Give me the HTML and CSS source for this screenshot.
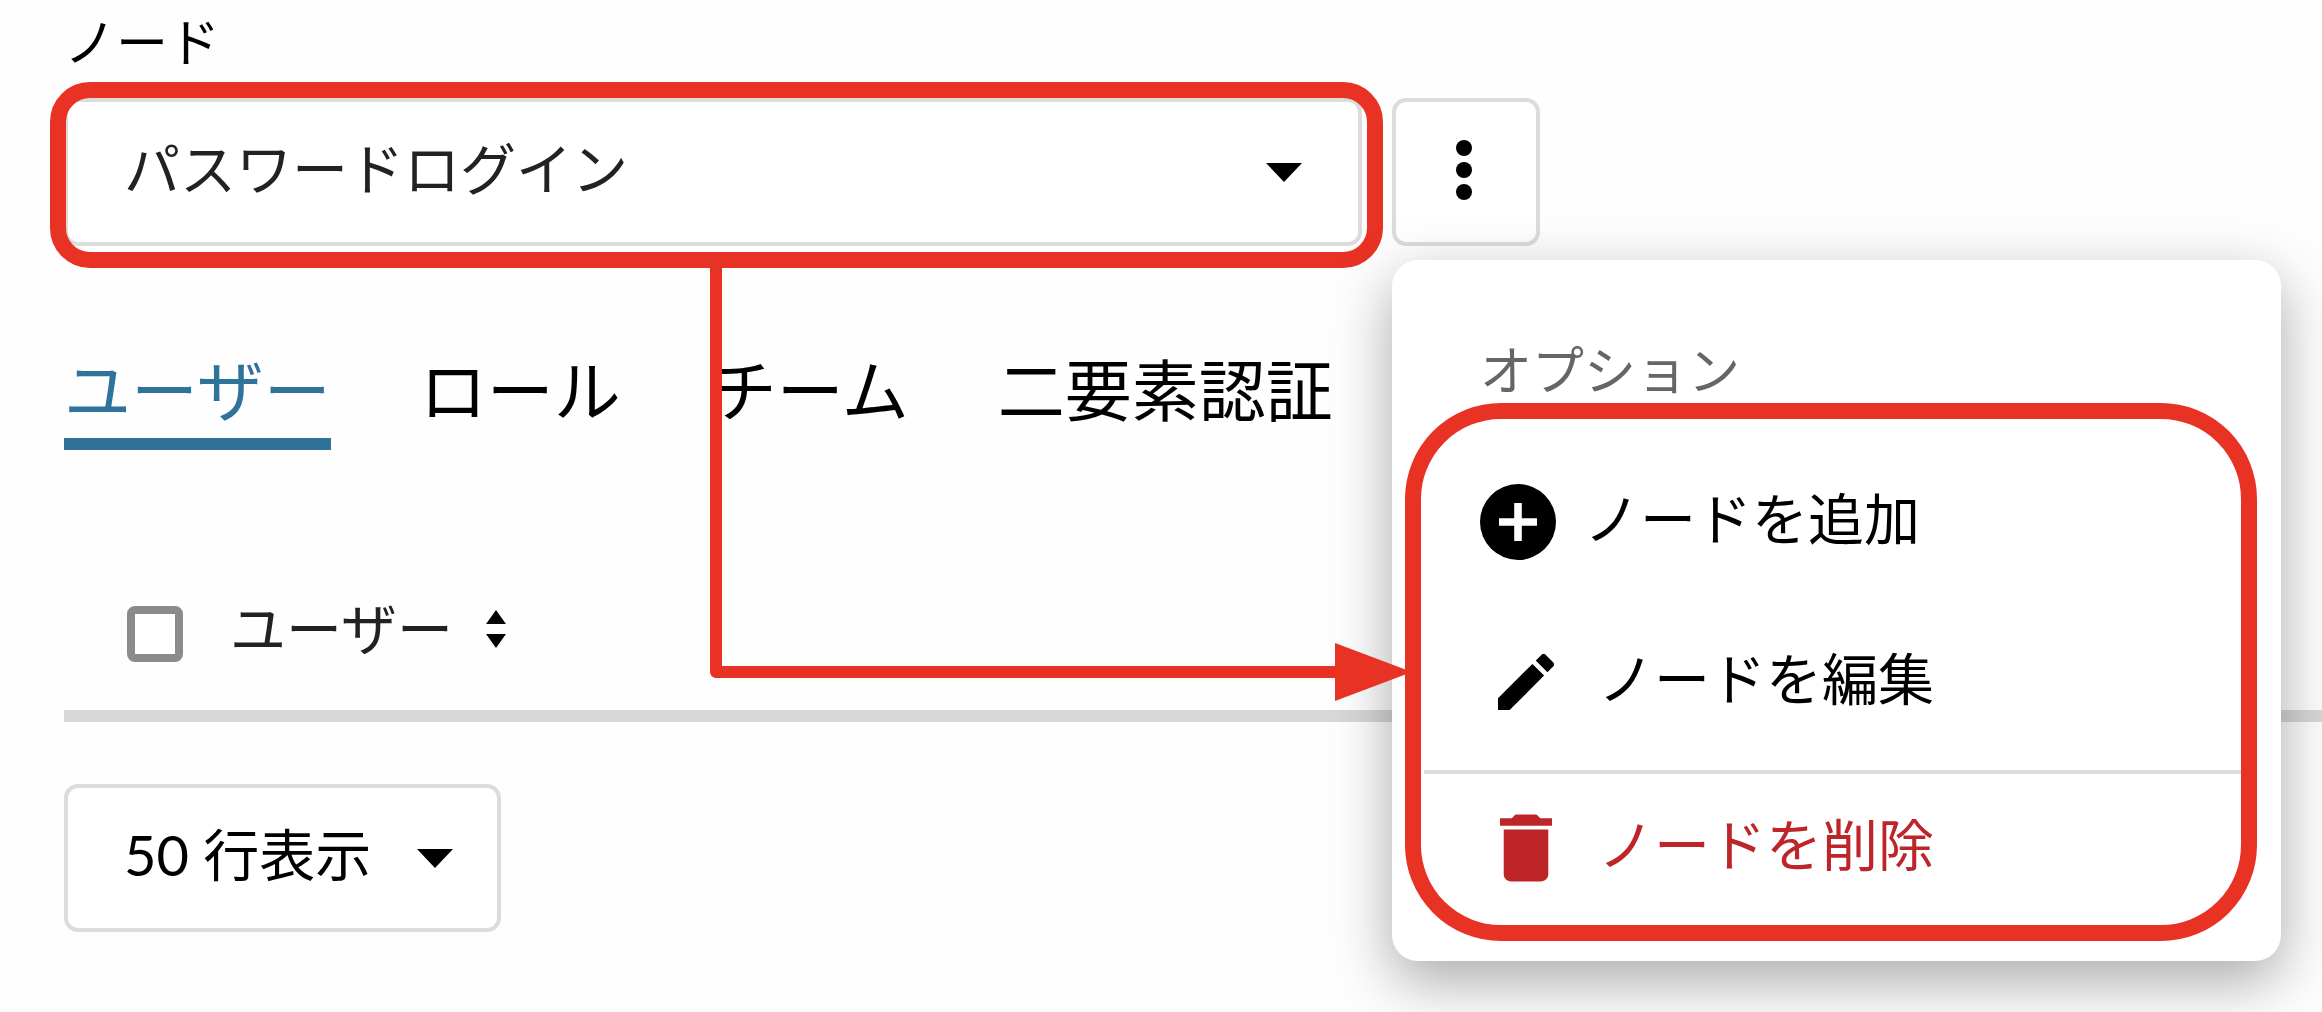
FILE: index.html
```html
<!DOCTYPE html>
<html lang="ja">
<head>
<meta charset="utf-8">
<meta name="viewport" content="width=device-width, initial-scale=1">
<title>ノード</title>
<link rel="stylesheet" href="styles.css">
</head>
<body>
<main class="page">
  <label class="node-label" for="node">ノード</label>
  <div class="node-row">
    <div class="select node-select">
      <select id="node" class="select-field">
        <option>パスワードログイン</option>
      </select>
      <svg class="caret" viewBox="0 0 36 19" aria-hidden="true"><path d="M0 0h36L18 19z"/></svg>
      <div class="highlight highlight-select"></div>
    </div>
    <div class="options">
      <button class="kebab" type="button" aria-label="オプション" aria-expanded="true">
        <svg class="kebab-icon" viewBox="0 0 16 60" aria-hidden="true"><circle cx="8" cy="8" r="8"/><circle cx="8" cy="30" r="8"/><circle cx="8" cy="52" r="8"/></svg>
      </button>
      <div class="menu">
        <h2 class="menu-title">オプション</h2>
        <div class="menu-list">
          <button class="menu-item" type="button">
            <svg class="icon-add" viewBox="2 2 20 20" aria-hidden="true"><path d="M12 2a10 10 0 1 0 0 20 10 10 0 0 0 0-20zm5 11h-4v4h-2v-4H7v-2h4V7h2v4h4v2z"/></svg>
            <span>ノードを追加</span>
          </button>
          <button class="menu-item menu-item-wide" type="button">
            <svg class="icon-edit" viewBox="3 3 18 18" aria-hidden="true"><path d="M3 17.25V21h3.75L17.81 9.94l-3.75-3.75L3 17.25zM20.71 7.04a1 1 0 0 0 0-1.41l-2.34-2.34a1 1 0 0 0-1.41 0l-1.83 1.83 3.75 3.75 1.83-1.83z"/></svg>
            <span>ノードを編集</span>
          </button>
          <button class="menu-item menu-item-wide menu-item-danger" type="button">
            <svg class="icon-delete" viewBox="5 3 14 18" aria-hidden="true"><path d="M6 19c0 1.100.9 2 2 2h8c1.100 0 2-.9 2-2V7H6v12zM19 4h-3.200l-.6-.7a1 1 0 0 0-.7-.3H9.500a1 1 0 0 0-.7.300l-.6.700H5v2h14V4z"/></svg>
            <span>ノードを削除</span>
          </button>
          <div class="highlight highlight-menu"></div>
        </div>
      </div>
    </div>
  </div>

  <nav class="tabs">
    <a class="tab tab-active" href="#users" aria-current="page">ユーザー</a>
    <a class="tab" href="#roles">ロール</a>
    <a class="tab" href="#teams">チーム</a>
    <a class="tab" href="#two-factor">二要素認証</a>
  </nav>

  <table class="users">
    <thead>
      <tr>
        <th class="cell-check"><input class="check" type="checkbox" aria-label="すべて選択"></th>
        <th class="cell-user">
          <button class="sort" type="button">ユーザー
            <svg class="sort-icon" viewBox="0 0 20 38" aria-hidden="true"><path d="M10 0l10 14H0zM0 24h20L10 38z"/></svg>
          </button>
        </th>
      </tr>
    </thead>
  </table>

  <div class="select rows-select">
    <select class="select-field" aria-label="表示行数">
      <option>50 行表示</option>
    </select>
    <svg class="caret" viewBox="0 0 36 19" aria-hidden="true"><path d="M0 0h36L18 19z"/></svg>
  </div>

  <svg class="connector" viewBox="0 0 702 436" aria-hidden="true"><path class="connector-line" d="M6 0v404h630"/><path class="connector-head" d="M625 375l77 29-77 29z"/></svg>
</main>
</body>
</html>
```
FILE: styles.css
```css
:root {
  --red: #e83224;
  --blue: #2f739b;
  --danger: #bd2529;
  --line: #dcdcdc;
}

* {
  box-sizing: border-box;
}

body {
  margin: 0;
  background: #fefefe;
  color: #000;
  font-family: Lato, "Noto Sans CJK JP", sans-serif;
  font-size: 56px;
}

button,
select {
  margin: 0;
  color: inherit;
  font: inherit;
}

.page {
  position: relative;
  padding: 14px 0 80px 64px;
}

.node-label {
  display: block;
  font-size: 52px;
  line-height: 56px;
}

.node-row {
  display: flex;
  gap: 30px;
  margin-top: 28px;
}

.select {
  display: grid;
  align-items: center;
  max-width: 100%;
}

.select-field {
  grid-area: 1 / 1;
  width: 100%;
  height: 148px;
  padding: 0 56px 8px;
  border: 4px solid var(--line);
  border-radius: 14px;
  background: #fff;
  appearance: none;
}

.caret {
  grid-area: 1 / 1;
  justify-self: end;
  width: 36px;
  height: 19px;
  pointer-events: none;
}

.node-select {
  position: relative;
  width: 1298px;
}

.node-select .select-field {
  color: #222;
}

.node-select .caret {
  margin-right: 60px;
}

.highlight {
  position: absolute;
  border: 16px solid var(--red);
  pointer-events: none;
}

.highlight-select {
  inset: -16px -21px -22px -14px;
  border-radius: 40px;
}

.options {
  position: relative;
}

.kebab {
  display: grid;
  place-items: center;
  width: 148px;
  height: 148px;
  padding: 0 4px 4px 0;
  border: 4px solid var(--line);
  border-radius: 14px;
  background: #fff;
}

.kebab-icon {
  width: 16px;
  height: 60px;
}

.menu {
  position: absolute;
  z-index: 1;
  top: 162px;
  left: 0;
  width: 889px;
  padding: 80px 32px 39px;
  border-radius: 26px;
  background: #fff;
  box-shadow: 0 20px 60px rgba(0, 0, 0, 0.34);
}

.menu-title {
  margin: 0 0 10px;
  padding-left: 56px;
  color: #666;
  font-size: 52px;
  font-weight: 400;
  line-height: 60px;
}

.menu-list {
  position: relative;
  padding-top: 32px;
}

.menu-item {
  display: grid;
  grid-template-columns: 76px 1fr;
  align-items: center;
  column-gap: 28px;
  width: 100%;
  height: 160px;
  padding: 0 0 0 56px;
  border: 0;
  background: none;
  line-height: 80px;
  text-align: left;
}

.menu-item span {
  padding-bottom: 6px;
}

.menu-item-wide {
  grid-template-columns: 92px 1fr;
  column-gap: 26px;
}

.menu-item-danger {
  height: 152px;
  margin-top: 8px;
  border-top: 4px solid var(--line);
  color: var(--danger);
}

.menu-item svg {
  fill: currentColor;
}

.icon-add {
  width: 76px;
  height: 76px;
}

.icon-edit {
  justify-self: center;
  width: 56px;
  height: 56px;
}

.icon-delete {
  justify-self: center;
  width: 52px;
  height: 68px;
}

.highlight-menu {
  inset: -7px -8px -19px -19px;
  border-radius: 96px;
}

.tabs {
  display: flex;
  gap: 89px;
  margin-top: 104px;
}

.tab {
  padding-bottom: 8px;
  border-bottom: 12px solid transparent;
  color: #000;
  font-size: 67px;
  line-height: 80px;
  text-decoration: none;
  white-space: nowrap;
}

.tab-active {
  border-color: var(--blue);
  color: var(--blue);
}

.users {
  width: 100%;
  margin-top: 146px;
  border-bottom: 12px solid #d8d8d8;
  border-collapse: separate;
  border-spacing: 0;
}

.users th {
  padding: 0 0 48px;
  font-weight: 400;
  line-height: 64px;
  text-align: left;
  vertical-align: middle;
}

.users .cell-check {
  width: 166px;
  padding-left: 63px;
}

.check {
  display: block;
  width: 56px;
  height: 56px;
  margin: 10px 0 0;
  border: 8px solid #8b8b8b;
  border-radius: 8px;
  background: #fff;
  appearance: none;
}

.sort {
  display: flex;
  align-items: center;
  gap: 32px;
  padding: 0;
  border: 0;
  background: none;
  color: #222;
  line-height: 64px;
}

.sort-icon {
  width: 22px;
  height: 38px;
  fill: #000;
}

.rows-select {
  width: 437px;
  margin-top: 62px;
}

.rows-select .caret {
  margin-right: 48px;
}

.connector {
  position: absolute;
  z-index: 2;
  top: 268px;
  left: 710px;
  width: 702px;
  height: 436px;
  pointer-events: none;
}

.connector-line {
  fill: none;
  stroke: var(--red);
  stroke-width: 12px;
  stroke-linejoin: round;
}

.connector-head {
  fill: var(--red);
}
```
